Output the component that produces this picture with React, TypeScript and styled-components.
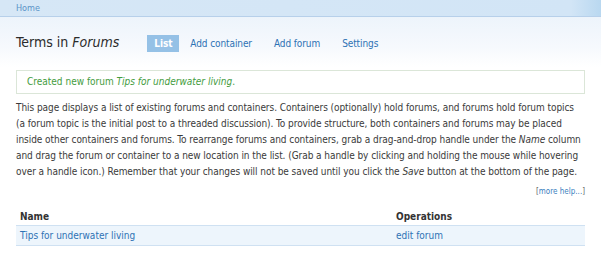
import styled, { createGlobalStyle } from "styled-components";

const GlobalStyle = createGlobalStyle`
    html, body {
        margin: 0;
        padding: 0;
        background: #fff;
    }
    body {
        font-family: "DejaVu Sans Condensed", "DejaVu Sans", Verdana, sans-serif;
        font-size: 10px;
        color: #3a3a3a;
    }
`

const Breadcrumb = styled.div`
    height: 16px;
    padding: 0 16px;
    display: flex;
    align-items: center;
    background: linear-gradient(to right, #d6e7f6 0%, #d2e5f6 95%, #b9d8f0 100%);
    border-bottom: 1px solid #b7d0ea;
    font-size: 9px;

    a {
        color: #5a94c8;
        text-decoration: none;
    }
`

const Header = styled.div`
    display: flex;
    align-items: center;
    padding: 0 16px;
    height: 50px;
    background: linear-gradient(to bottom, #edf4fb 0%, #f6f9fd 60%, #ffffff 100%);
`

const Title = styled.h1`
    margin: 0 28px 0 0;
    font-size: 14px;
    font-weight: normal;
    color: #2b2b2b;
`

// tabs sit right after the title, the active one gets a blue block
const Tabs = styled.ul`
    display: flex;
    align-items: center;
    margin: 2px 0 0;
    padding: 0;
    list-style: none;
`

const Tab = styled.li<{ $active?: boolean }>`
    padding: ${p => (p.$active ? "3px 7px" : "3px 11px")};
    font-size: 10px;
    letter-spacing: -0.1px;
    color: ${p => (p.$active ? "#fff" : "#2d72b4")};
    background: ${p => (p.$active ? "#95c1e6" : "transparent")};
    font-weight: ${p => (p.$active ? "bold" : "normal")};
`

const Content = styled.div`
    padding: 3px 16px 0;
`

const Message = styled.div`
    border: 1px solid #dbe6d8;
    padding: 5px 10px;
    height: 12px;
    line-height: 12px;
    color: #449c3e;
`

const Help = styled.p`
    margin: 6px 0 0;
    line-height: 16px;
    letter-spacing: -0.06px;
    white-space: nowrap;
    color: #3a3a3a;
`

const MoreHelp = styled.div`
    text-align: right;
    margin-top: 7px;
    font-size: 8px;
    color: #666;

    a {
        color: #3b7fc0;
        text-decoration: none;
    }
`

const Table = styled.table`
    width: 100%;
    margin-top: 11px;
    border-collapse: collapse;

    th {
        text-align: left;
        font-weight: bold;
        color: #333;
        padding: 4px 4px 3px;
        border-bottom: 1px solid #cfe1f2;
    }

    td {
        padding: 4px 4px 4px;
        background: #edf5fc;
        border-bottom: 1px solid #cfe1f2;
        color: #2d72b4;
    }
`

const App = () => {
    return (
        <>
            <GlobalStyle />
            <Breadcrumb>
                <a href="#">Home</a>
            </Breadcrumb>

            <Header>
                <Title>Terms in <em>Forums</em></Title>
                <Tabs>
                    <Tab $active>List</Tab>
                    <Tab>Add container</Tab>
                    <Tab>Add forum</Tab>
                    <Tab>Settings</Tab>
                </Tabs>
            </Header>

            <Content>
                <Message>Created new forum <em>Tips for underwater living</em>.</Message>

                <Help>
                    This page displays a list of existing forums and containers. Containers (optionally) hold forums, and forums hold forum topics<br />
                    (a forum topic is the initial post to a threaded discussion). To provide structure, both containers and forums may be placed<br />
                    inside other containers and forums. To rearrange forums and containers, grab a drag-and-drop handle under the <em>Name</em> column<br />
                    and drag the forum or container to a new location in the list. (Grab a handle by clicking and holding the mouse while hovering<br />
                    over a handle icon.) Remember that your changes will not be saved until you click the <em>Save</em> button at the bottom of the page.
                </Help>

                <MoreHelp>[<a href="#">more help...</a>]</MoreHelp>

                <Table>
                    <thead>
                        <tr>
                            <th style={{ width: "368px" }}>Name</th>
                            <th>Operations</th>
                        </tr>
                    </thead>
                    <tbody>
                        <tr>
                            <td>Tips for underwater living</td>
                            <td>edit forum</td>
                        </tr>
                    </tbody>
                </Table>
            </Content>
        </>
    );
}

export default App;
